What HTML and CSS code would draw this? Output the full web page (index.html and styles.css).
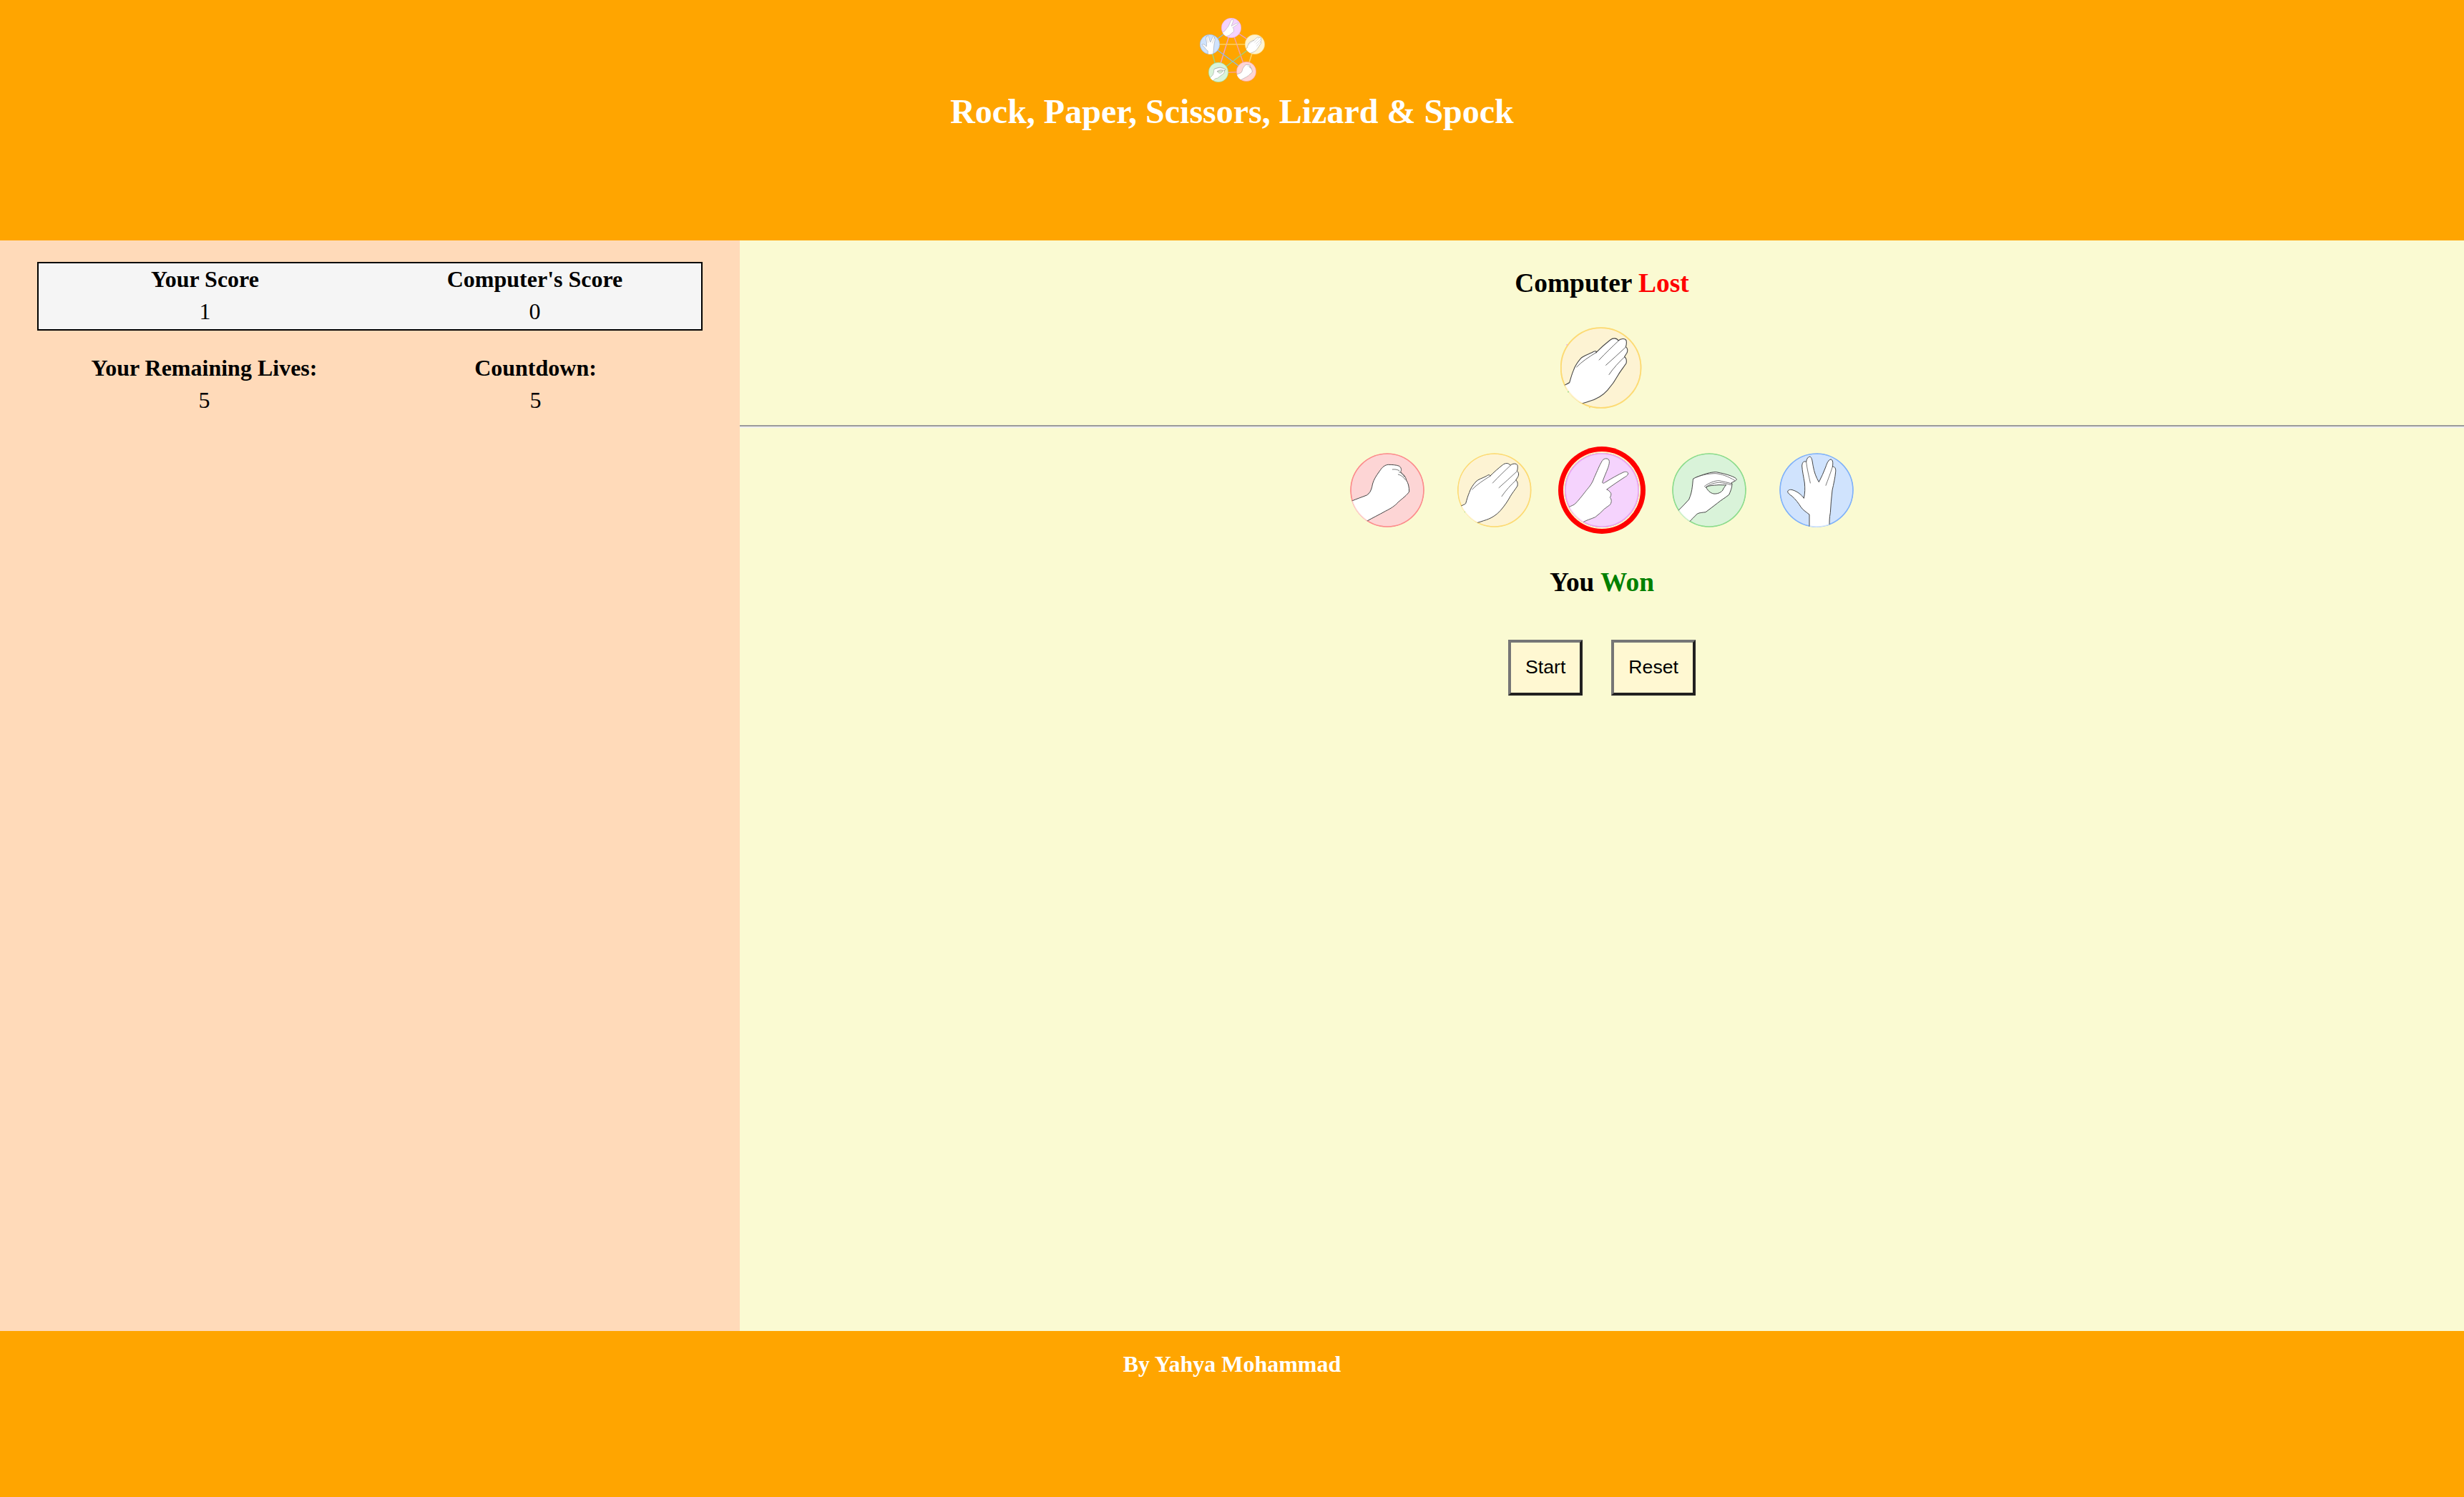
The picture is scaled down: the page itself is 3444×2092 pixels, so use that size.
FILE: index.html
```html
<!DOCTYPE html>
<html lang="en">
<head>
<meta charset="utf-8">
<title>Rock, Paper, Scissors, Lizard &amp; Spock</title>
<link rel="stylesheet" href="styles.css">
</head>
<body>
<svg class="defs" width="0" height="0" aria-hidden="true">
  <defs>
    <clipPath id="c-rock"><circle cx="208" cy="226" r="155"/></clipPath>
    <clipPath id="c-paper"><circle cx="655" cy="226" r="155"/></clipPath>
    <clipPath id="c-scissors"><circle cx="236" cy="225" r="155"/></clipPath>
    <clipPath id="c-lizard"><circle cx="205" cy="226" r="155"/></clipPath>
    <clipPath id="c-spock"><circle cx="658" cy="226" r="155"/></clipPath>

    <symbol id="rock" viewBox="52 70 312 312">
      <circle cx="208" cy="226" r="153" fill="#fdd5d5" stroke="#fc8d8d" stroke-width="5"/>
      <g clip-path="url(#c-rock)">
        <path fill="#fff" d="M58 272C80 262 100 256 122 247C134 240 140 228 144 212C148 186 160 168 176 146C186 130 198 120 212 119C226 119 248 120 258 125C268 132 268 142 264 150C276 160 286 170 288 184C296 196 300 212 300 232C292 246 270 262 254 276C240 292 224 302 200 314C172 330 146 342 122 356L80 345L50 280Z"/>
        <path class="hand-line" d="M58 272C80 262 100 256 122 247C134 240 140 228 144 212C148 186 160 168 176 146C186 130 198 120 212 119C226 119 248 120 258 125C268 132 268 142 264 150C276 160 286 170 288 184C296 196 300 212 300 232C292 246 270 262 254 276C240 292 224 302 200 314C172 330 146 342 122 356"/>
        <path class="hand-crease" d="M230 139C240 138 250 139 258 144M254 160C264 162 276 170 284 182M258 150C266 152 274 160 280 170"/>
      </g>
      <circle cx="208" cy="226" r="153" fill="none" stroke="#fc8d8d" stroke-width="5" stroke-opacity=".35"/>
      <circle cx="155" cy="78" r="2.5" fill="#fc8d8d"/><circle cx="51" cy="230" r="2.5" fill="#fc8d8d"/>
    </symbol>

    <symbol id="paper" viewBox="500 70 312 312">
      <circle cx="655" cy="226" r="153" fill="#fdf3d3" stroke="#fddb74" stroke-width="5"/>
      <g clip-path="url(#c-paper)">
        <path fill="#fff" d="M516 292C524 288 530 286 535 282C540 264 544 250 550 236C556 218 564 206 578 190C588 180 604 176 620 168C626 164 632 160 636 163C640 166 638 168 636 168C654 150 672 134 690 120C700 112 714 110 722 122C730 114 748 112 752 122C754 132 752 140 750 146C758 150 758 162 754 170C750 176 748 180 745 184C752 188 754 196 752 208C742 224 730 238 722 252C710 274 696 294 680 312C664 330 640 346 610 354C600 358 592 360 585 362L540 345Z"/>
        <path class="hand-line" d="M516 292C524 288 530 286 535 282C540 264 544 250 550 236C556 218 564 206 578 190C588 180 604 176 620 168C626 164 632 160 636 163C640 166 638 168 636 168C654 150 672 134 690 120C700 112 714 110 722 122C730 114 748 112 752 122C754 132 752 140 750 146C758 150 758 162 754 170C750 176 748 180 745 184C752 188 754 196 752 208C742 224 730 238 722 252C710 274 696 294 680 312C664 330 640 346 610 354C600 358 592 360 585 362"/>
        <path class="hand-crease" d="M722 123C700 144 672 170 648 196M750 147C726 170 698 194 674 216M745 185C726 202 702 228 686 252M636 168C610 184 582 202 562 223"/>
      </g>
      <circle cx="655" cy="226" r="153" fill="none" stroke="#fddb74" stroke-width="5" stroke-opacity=".35"/>
      <circle cx="525" cy="138" r="2.6" fill="#eea0ee"/><circle cx="502" cy="226" r="2.6" fill="#fddb74"/><circle cx="530" cy="318" r="2.6" fill="#8ddc8d"/><circle cx="612" cy="378" r="2.6" fill="#fddb74"/>
    </symbol>

    <symbol id="scissors" viewBox="80 69 312 312">
      <circle cx="236" cy="225" r="153" fill="#f5d3fd" stroke="#e8a5f6" stroke-width="5"/>
      <g clip-path="url(#c-scissors)">
        <path fill="#fff" d="M98 296C108 290 118 288 124 282C138 268 152 250 166 232C178 216 194 202 204 172C216 146 226 120 236 104C242 92 256 90 264 96C270 104 266 118 262 130C254 152 244 172 238 192C240 198 244 196 250 192C276 176 304 160 326 150C336 146 346 148 346 156C344 164 336 168 326 174C302 190 278 206 256 222C262 224 270 230 274 238C276 246 272 252 270 256C276 262 278 272 272 284C266 290 256 296 246 304C234 316 222 328 208 338C190 346 172 350 155 360L115 340Z"/>
        <path class="hand-line hand-line-soft" d="M98 296C108 290 118 288 124 282C138 268 152 250 166 232C178 216 194 202 204 172C216 146 226 120 236 104C242 92 256 90 264 96C270 104 266 118 262 130C254 152 244 172 238 192C240 198 244 196 250 192C276 176 304 160 326 150C336 146 346 148 346 156C344 164 336 168 326 174C302 190 278 206 256 222C262 224 270 230 274 238C276 246 272 252 270 256C276 262 278 272 272 284C266 290 256 296 246 304C234 316 222 328 208 338C190 346 172 350 155 360"/>
      </g>
      <circle cx="236" cy="225" r="153" fill="none" stroke="#e8a5f6" stroke-width="5" stroke-opacity=".35"/>
    </symbol>

    <symbol id="lizard" viewBox="49 70 312 312">
      <circle cx="205" cy="226" r="153" fill="#d9f3d9" stroke="#8ddc8d" stroke-width="5"/>
      <g clip-path="url(#c-lizard)">
        <path fill="#fff" d="M75 312C90 296 106 282 120 265C128 246 132 230 134 212C136 198 136 186 138 178C152 170 176 162 196 156C210 152 224 150 234 150C256 154 280 160 296 166C306 170 316 174 320 180C318 186 312 188 298 195C304 204 298 222 288 245C272 258 254 268 240 280C222 294 206 306 190 318C176 320 164 320 155 325C142 338 132 348 122 358L85 340Z"/>
        <path class="hand-line hand-hole" d="M192 214C200 206 222 206 244 204C256 204 268 205 276 204C270 212 264 218 262 226C252 238 238 242 224 241C208 238 198 226 192 214Z"/>
        <path class="hand-line" d="M75 312C90 296 106 282 120 265C128 246 132 230 134 212C136 198 136 186 138 178C152 170 176 162 196 156C210 152 224 150 234 150C256 154 280 160 296 166C306 170 316 174 320 180C318 186 312 188 298 195C304 204 298 222 288 245C272 258 254 268 240 280C222 294 206 306 190 318C176 320 164 320 155 325C142 338 132 348 122 358"/>
        <path class="hand-crease" d="M150 172C180 160 210 156 232 156C256 158 284 168 312 185M185 210C205 194 230 186 246 186C262 190 280 192 302 200M190 214C208 200 232 194 248 194C264 196 280 198 296 204"/>
      </g>
      <circle cx="205" cy="226" r="153" fill="none" stroke="#8ddc8d" stroke-width="5" stroke-opacity=".35"/>
      <circle cx="155" cy="76" r="2.5" fill="#8ddc8d"/><circle cx="358" cy="220" r="2.5" fill="#8ddc8d"/>
    </symbol>

    <symbol id="spock" viewBox="502 70 312 312">
      <circle cx="658" cy="226" r="153" fill="#d0e3fd" stroke="#80b2f9" stroke-width="5"/>
      <g clip-path="url(#c-spock)">
        <path fill="#fff" d="M628 385L628 328C612 316 600 308 592 296C582 280 570 264 556 252C546 244 538 240 537 232C538 224 550 222 560 226C578 232 596 246 605 260C610 236 610 220 608 196C604 170 598 146 597 124C598 108 606 102 615 108C616 94 624 84 632 86C640 92 640 106 644 126C648 150 656 172 668 192C678 172 688 152 696 130C702 112 708 98 718 97C726 98 728 110 725 128C734 126 740 134 738 150C736 172 730 200 724 226C720 258 718 290 716 320C712 340 712 360 712 390Z"/>
        <path class="hand-line" d="M628 378L628 328C612 316 600 308 592 296C582 280 570 264 556 252C546 244 538 240 537 232C538 224 550 222 560 226C578 232 596 246 605 260C610 236 610 220 608 196C604 170 598 146 597 124C598 108 606 102 615 108C616 94 624 84 632 86C640 92 640 106 644 126C648 150 656 172 668 192C678 172 688 152 696 130C702 112 708 98 718 97C726 98 728 110 725 128C734 126 740 134 738 150C736 172 730 200 724 226C720 258 718 290 716 320C712 340 712 360 712 370"/>
        <path class="hand-crease" d="M615 108C618 136 626 166 632 196M725 128C716 156 706 182 697 206"/>
      </g>
      <circle cx="658" cy="226" r="153" fill="none" stroke="#80b2f9" stroke-width="5" stroke-opacity=".35"/>
    </symbol>
  </defs>
</svg>

<header class="site-header">
  <svg class="logo" width="92" height="92" viewBox="0 0 92 92" role="img" aria-label="Game logo">
    <g class="logo-lines">
      <path stroke="#f0a0c8" d="M45 16L78 38M45 16L26 78"/>
      <path stroke="#f8a0a0" d="M45 16L66 76"/>
      <path stroke="#fdd060" d="M78 38L15 38M78 38L66 76"/>
      <path stroke="#a0d080" d="M78 38L26 78M26 78L15 38"/>
      <path stroke="#f8a090" d="M66 76L26 78"/>
      <path stroke="#90b8e0" d="M15 38L66 76M15 38L45 16"/>
    </g>
    <use href="#scissors" x="31" y="1" width="28" height="28"/>
    <use href="#paper" x="64" y="24" width="28" height="28"/>
    <use href="#rock" x="52" y="62" width="28" height="28"/>
    <use href="#lizard" x="13" y="63" width="28" height="28"/>
    <use href="#spock" x="1" y="24" width="28" height="28"/>
  </svg>
  <h1 class="site-title">Rock, Paper, Scissors, Lizard &amp; Spock</h1>
</header>

<div class="middle">
  <aside class="sidebar">
    <div class="stat-grid stat-grid-boxed">
      <div class="stat-label">Your Score</div>
      <div class="stat-label">Computer's Score</div>
      <div class="stat-value">1</div>
      <div class="stat-value">0</div>
    </div>
    <div class="stat-grid stat-grid-plain">
      <div class="stat-label">Your Remaining Lives:</div>
      <div class="stat-label">Countdown:</div>
      <div class="stat-value">5</div>
      <div class="stat-value">5</div>
    </div>
  </aside>

  <main class="arena">
    <h2 class="result result-computer">Computer <span class="lost">Lost</span></h2>
    <svg class="computer-pick" width="114" height="114"><use href="#paper" width="114" height="114"/></svg>
    <hr class="divider">
    <div class="choices">
      <svg class="choice" width="104" height="104"><use href="#rock" width="104" height="104"/></svg>
      <svg class="choice" width="104" height="104"><use href="#paper" width="104" height="104"/></svg>
      <svg class="choice choice-selected" width="104" height="104"><use href="#scissors" width="104" height="104"/></svg>
      <svg class="choice" width="104" height="104"><use href="#lizard" width="104" height="104"/></svg>
      <svg class="choice" width="104" height="104"><use href="#spock" width="104" height="104"/></svg>
    </div>
    <h2 class="result result-player">You <span class="won">Won</span></h2>
    <div class="actions">
      <button class="action" type="button">Start</button>
      <button class="action" type="button">Reset</button>
    </div>
  </main>
</div>

<footer class="site-footer">By Yahya Mohammad</footer>
</body>
</html>
```

FILE: styles.css
```css
html, body {
  margin: 0;
  padding: 0;
}

body {
  width: 3444px;
  height: 2092px;
  display: grid;
  grid-template-rows: 336px 1524px 232px;
  overflow: hidden;
  font-family: "Liberation Serif", "Times New Roman", serif;
  font-size: 32px;
  color: #000;
}

.defs {
  position: absolute;
}

.hand-line {
  fill: none;
  stroke: #444;
  stroke-width: 3;
  stroke-linejoin: round;
  stroke-linecap: round;
}

.hand-line-soft {
  stroke: #666;
}

.hand-hole {
  fill: #d9f3d9;
}

.hand-crease {
  fill: none;
  stroke: #555;
  stroke-width: 2.4;
  stroke-linecap: round;
}

.site-header {
  background: #ffa500;
  display: flex;
  flex-direction: column;
  align-items: center;
  padding-top: 24px;
  box-sizing: border-box;
}

.logo {
  display: block;
}

.logo-lines {
  fill: none;
  stroke-width: 1.5;
}

.site-title {
  margin: 12px 0 0;
  font-size: 48px;
  font-weight: bold;
  color: #fff;
  line-height: 55px;
}

.middle {
  display: grid;
  grid-template-columns: 1034px 1fr;
}

.sidebar {
  background: #ffdab9;
  padding: 30px 52px 0;
  box-sizing: border-box;
}

.stat-grid {
  display: grid;
  grid-template-columns: 1fr 1fr;
  gap: 4px;
  padding: 4px;
  text-align: center;
}

.stat-grid-boxed {
  background: #f5f5f5;
  border: 2px solid #000;
  height: 96px;
  box-sizing: border-box;
  padding: 0 4px 2px;
  align-content: center;
}

.stat-grid-plain {
  margin-top: 28px;
}

.stat-label {
  font-weight: bold;
  padding: 2px;
}

.stat-value {
  padding: 2px;
}

.arena {
  background: #fafad2;
  display: flex;
  flex-direction: column;
  align-items: center;
}

.result {
  margin: 0;
  font-size: 37.44px;
  font-weight: bold;
  line-height: 41px;
}

.result-computer {
  margin-top: 39px;
}

.lost {
  color: #f00;
}

.won {
  color: #008000;
}

.computer-pick {
  display: block;
  margin: 41px 2px 0 0;
}

.divider {
  align-self: stretch;
  margin: 23px 0 0;
  height: 0;
  border: 0;
  border-top: 2px solid #9a9a9a;
  border-bottom: 2px solid #eeeeee;
}

.choices {
  display: flex;
  gap: 46px;
  margin-top: 35px;
}

.choice {
  display: block;
  border-radius: 50%;
}

.choice-selected {
  box-shadow: 0 0 0 2px #fafad2, 0 0 0 9px #f00;
}

.result-player {
  margin-top: 56px;
}

.actions {
  display: flex;
  gap: 40px;
  margin-top: 60px;
}

.action {
  height: 78px;
  padding: 0 20px 2px;
  box-sizing: border-box;
  background: #fff8d2;
  border: 4px solid;
  border-color: #767676 #212121 #212121 #767676;
  font-family: "Liberation Sans", Arial, sans-serif;
  font-size: 26.67px;
  color: #000;
}

.site-footer {
  background: #ffa500;
  color: #fff;
  font-weight: bold;
  text-align: center;
  padding-top: 28px;
  box-sizing: border-box;
}
```
